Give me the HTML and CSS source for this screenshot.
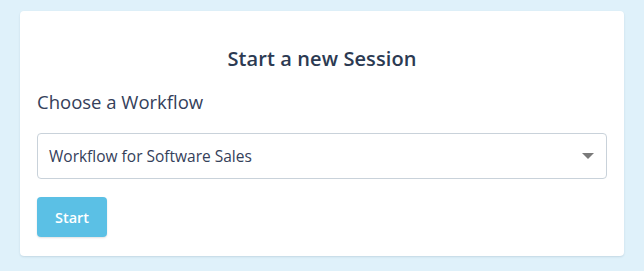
FILE: index.html
```html
<!DOCTYPE html>
<html>
<head>
<meta charset="utf-8">
<link rel="stylesheet" href="styles.css">
</head>
<body>
<div class="card">
  <h2 class="title">Start a new Session</h2>
  <label class="label">Choose a Workflow</label>
  <div class="select">
    <span class="select-text">Workflow for Software Sales</span>
    <span class="caret"></span>
  </div>
  <button class="btn">Start</button>
</div>
</body>
</html>
```
FILE: styles.css
```css
html, body {
  margin: 0;
  padding: 0;
}
body {
  background: #dff1fa;
  font-family: "Open Sans", "Lato", sans-serif;
  color: #2c3a52;
  padding: 11px 20px 15px 20px;
  height: 271px;
  box-sizing: border-box;
}
.card {
  background: #fff;
  border-radius: 4px;
  box-shadow: 0 1px 2px rgba(40, 80, 110, 0.15);
  height: 245px;
  box-sizing: border-box;
  padding: 35px 17px 0 17px;
  display: flex;
  flex-direction: column;
}
.title {
  margin: 0;
  text-align: center;
  font-size: 20px;
  font-weight: 600;
  letter-spacing: 0.1px;
  line-height: 26px;
}
.label {
  margin-top: 18px;
  font-size: 18.5px;
  line-height: 24px;
  color: #34405a;
}
.select {
  margin-top: 19px;
  height: 46px;
  border: 1px solid #c9d2da;
  border-radius: 4px;
  box-sizing: border-box;
  display: flex;
  align-items: center;
  justify-content: space-between;
  padding: 0 12px 0 11px;
}
.select-text {
  font-size: 15.5px;
  color: #34405a;
}
.caret {
  width: 0;
  height: 0;
  border-left: 6px solid transparent;
  border-right: 6px solid transparent;
  border-top: 6px solid #7a7a7a;
}
.btn {
  margin-top: 18px;
  align-self: flex-start;
  width: 70px;
  height: 40px;
  background: #5bc0e5;
  border: none;
  border-radius: 4px;
  color: #fff;
  font-family: "Open Sans", "Lato", sans-serif;
  font-size: 14.5px;
  font-weight: 600;
  box-shadow: 0 1px 2px rgba(0, 0, 0, 0.12);
}
```
